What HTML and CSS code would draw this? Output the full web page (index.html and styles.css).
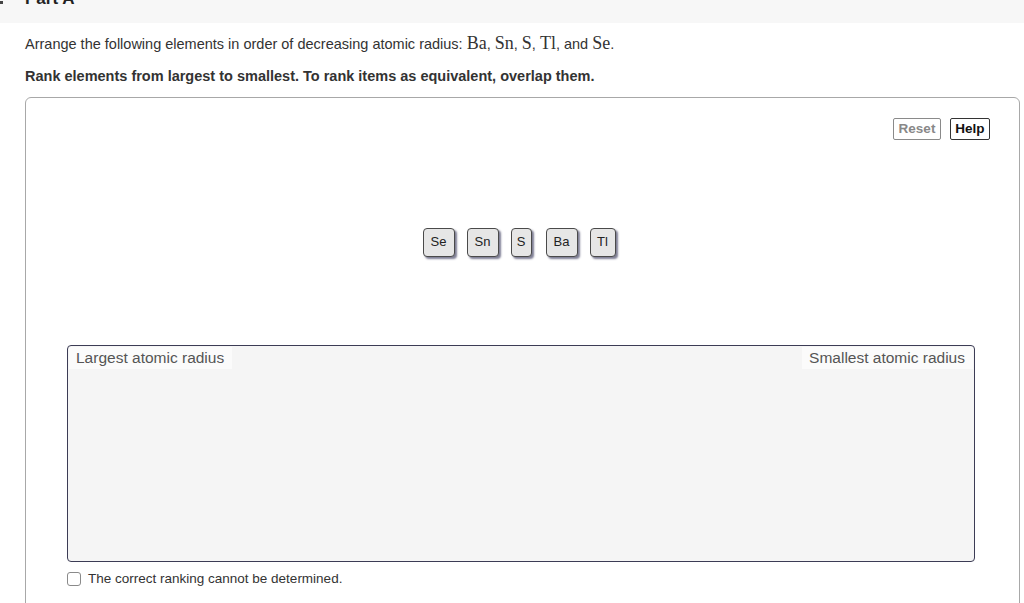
FILE: index.html
```html
<!DOCTYPE html>
<html>
<head>
<meta charset="utf-8">
<link rel="stylesheet" href="styles.css">
</head>
<body>
<div class="header">
  <span class="caret"></span>
  <h2 class="part-title">Part A</h2>
</div>
<div class="content">
  <p class="question">Arrange the following elements in order of decreasing atomic radius: <span class="math">Ba</span>, <span class="math">Sn</span>, <span class="math">S</span>, <span class="math">Tl</span>, and <span class="math">Se</span>.</p>
  <p class="instruction">Rank elements from largest to smallest. To rank items as equivalent, overlap them.</p>
  <div class="panel">
    <div class="toolbar">
      <button class="tool-btn reset">Reset</button>
      <button class="tool-btn help">Help</button>
    </div>
    <div class="tiles">
      <div class="tile">Se</div>
      <div class="tile">Sn</div>
      <div class="tile narrow">S</div>
      <div class="tile">Ba</div>
      <div class="tile tl">Tl</div>
    </div>
    <div class="rank-area">
      <span class="rank-label">Largest atomic radius</span>
      <span class="rank-label">Smallest atomic radius</span>
    </div>
    <label class="cant-determine">
      <span class="checkbox"></span>
      <span>The correct ranking cannot be determined.</span>
    </label>
  </div>
</div>
</body>
</html>
```

FILE: styles.css
```css
html, body {
  margin: 0;
  padding: 0;
  background: #ffffff;
  font-family: "Liberation Sans", Arial, sans-serif;
  color: #333333;
  overflow: hidden;
}

.header {
  height: 23px;
  background: #f7f7f7;
  overflow: hidden;
  display: flex;
  align-items: flex-start;
}

.caret {
  width: 3px;
  height: 3px;
  background: #444;
  margin-top: 1px;
}

.part-title {
  margin: -10px 0 0 22px;
  font-size: 17px;
  line-height: 18px;
  font-weight: bold;
  color: #222;
}

.content {
  padding: 0 4px 0 25px;
}

.question {
  margin: 12px 0 0 0;
  font-size: 14.5px;
  line-height: 18px;
}

.math {
  font-family: "Liberation Serif", "Times New Roman", serif;
  font-size: 18px;
  line-height: 14px;
}

.instruction {
  margin: 14px 0 0 0;
  font-size: 14.5px;
  line-height: 18px;
  font-weight: bold;
}

.panel {
  margin-top: 12px;
  box-sizing: border-box;
  width: 995px;
  height: 520px;
  border: 1px solid #a8a8a8;
  border-radius: 6px;
  padding: 20px 29px 0 41px;
}

.toolbar {
  display: flex;
  justify-content: flex-end;
  gap: 9px;
}

.tool-btn {
  box-sizing: border-box;
  height: 22px;
  padding: 0 4px;
  font-family: "Liberation Sans", Arial, sans-serif;
  font-size: 13.5px;
  font-weight: bold;
  background: #ffffff;
  border-radius: 2px;
  line-height: 18px;
}

.reset {
  color: #888888;
  border: 1px solid #8a8a8a;
  width: 48px;
}

.help {
  color: #111111;
  border: 1px solid #333333;
  width: 40px;
}

.tiles {
  display: flex;
  justify-content: center;
  gap: 12px;
  margin-top: 88px;
  padding-right: 19px;
}

.tile {
  box-sizing: border-box;
  height: 29px;
  width: 32px;
  border: 1px solid #4a4a4a;
  border-radius: 4px;
  background: #e6e6e6;
  box-shadow: 2px 2px 2px #7f7f95;
  font-size: 13px;
  line-height: 25px;
  text-align: center;
  color: #222;
  padding-bottom: 2px;
}

.tile.narrow {
  width: 21px;
}

.tile.tl {
  width: 26px;
}

.tiles .tile.narrow + .tile {
  margin-left: 2px;
}

.rank-area {
  margin-top: 88px;
  box-sizing: border-box;
  width: 908px;
  height: 217px;
  background: #f5f5f5;
  border: 1px solid #3c3c55;
  border-radius: 4px;
  display: flex;
  justify-content: space-between;
  align-items: flex-start;
  padding: 1px 1px 0 1px;
}

.rank-label {
  background: #fbfbfb;
  color: #555555;
  font-size: 15.5px;
  line-height: 22px;
  padding: 0 8px 0 7px;
}

.cant-determine {
  display: flex;
  align-items: center;
  gap: 7px;
  margin-top: 9px;
  font-size: 13.5px;
  color: #333;
}

.checkbox {
  box-sizing: border-box;
  width: 14px;
  height: 14px;
  border: 1px solid #8a8a8a;
  border-radius: 3px;
  background: #fff;
}
```
